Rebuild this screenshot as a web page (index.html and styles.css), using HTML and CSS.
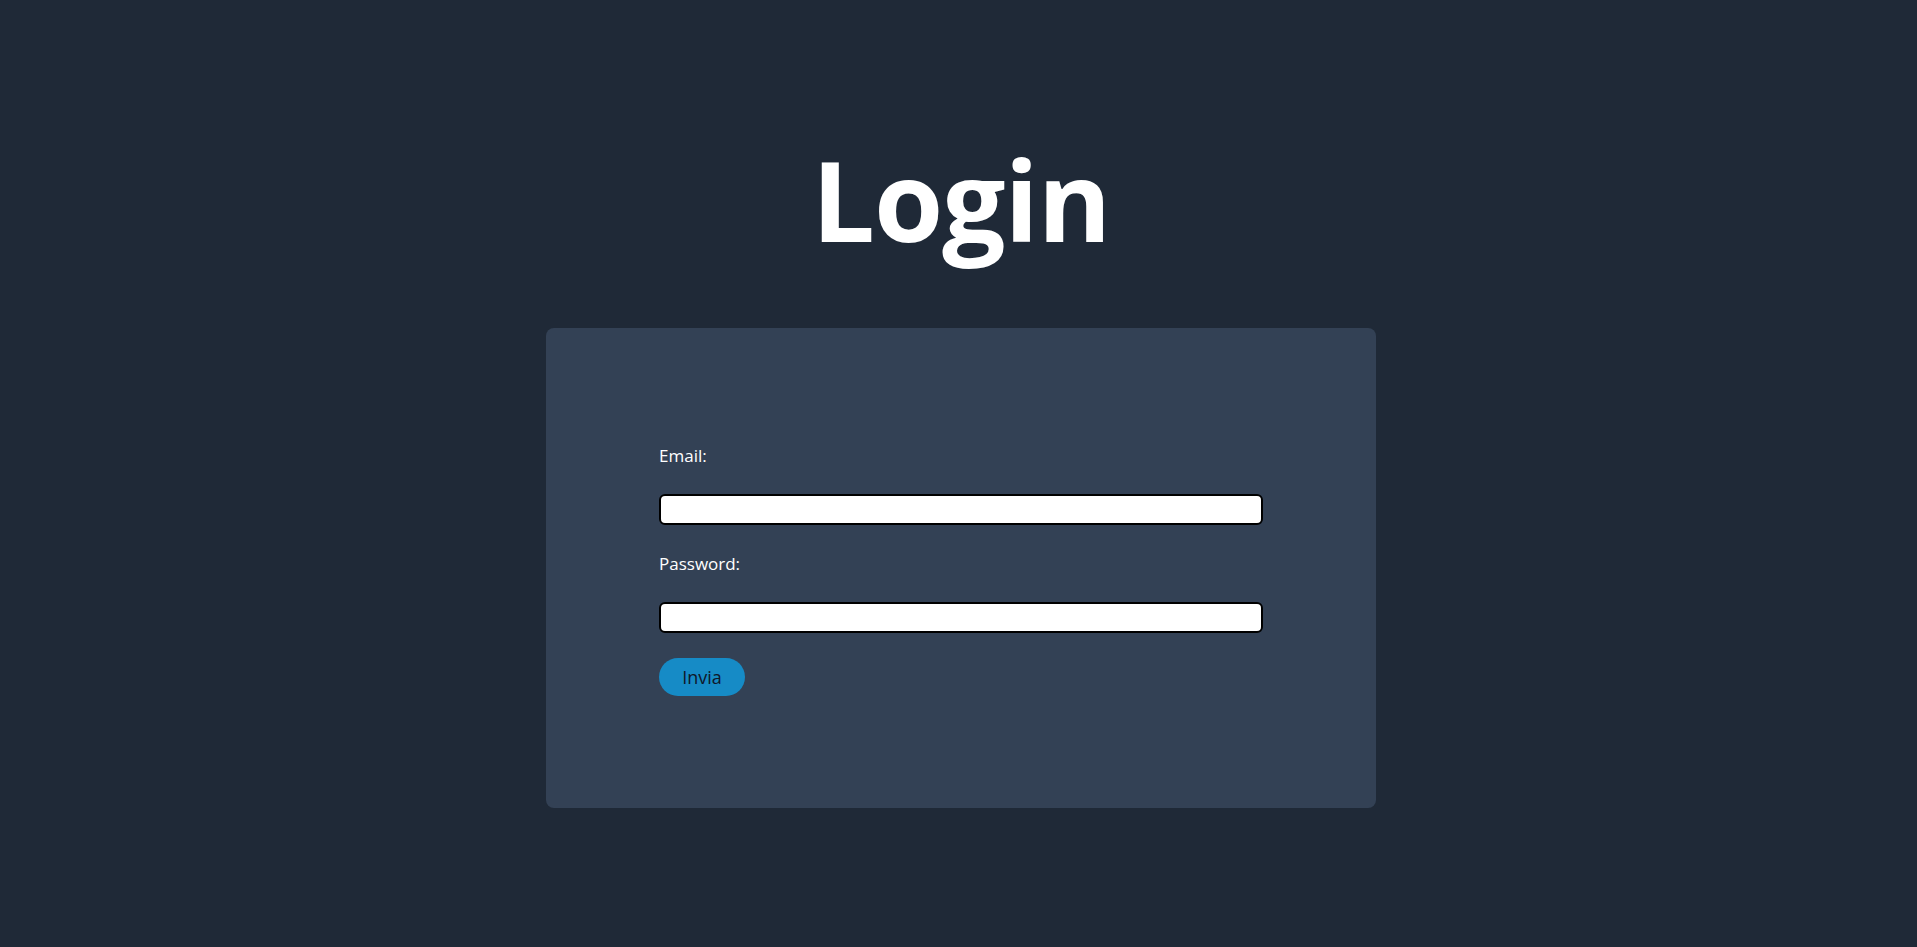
FILE: index.html
```html
<!DOCTYPE html>
<html lang="it">
<head>
    <meta charset="UTF-8">
    <meta name="viewport" content="width=device-width, initial-scale=1.0">
    <title>Login</title>
    <link rel="stylesheet" href="styles.css">
</head>
<body>
    <main class="page">
        <h1 class="title">Login</h1>
        <div class="card">
            <form class="login-form" onsubmit="return false;">
                <label for="email" class="field-label">Email:</label>
                <input type="email" id="email" class="field-input">
                <label for="password" class="field-label">Password:</label>
                <input type="password" id="password" class="field-input">
                <button type="submit" class="submit-button">Invia</button>
            </form>
        </div>
    </main>
</body>
</html>
```

FILE: styles.css
```css
body {
    margin: 0;
    background-color: #1f2937;
    font-family: "Open Sans", "Noto Sans", sans-serif;
    color: white;
}
.page {
    display: flex;
    flex-direction: column;
    align-items: center;
    min-height: 947px;
    padding-left: 5px;
}
.title {
    font-size: 112px;
    font-weight: 700;
    line-height: 1;
    margin: 143px 0 0;
    letter-spacing: -1px;
}
.card {
    margin-top: 73px;
    width: 830px;
    height: 480px;
    box-sizing: border-box;
    background-color: #334155;
    border-radius: 8px;
    padding: 116px 113px 0;
}
.login-form {
    display: flex;
    flex-direction: column;
    align-items: flex-start;
}
.field-label {
    font-size: 17px;
    line-height: 24px;
    margin-bottom: 26px;
}
.field-input {
    width: 100%;
    height: 31px;
    box-sizing: border-box;
    border: 2px solid black;
    border-radius: 6px;
    background: white;
    margin: 0 0 27px;
    padding: 0 8px;
}
.submit-button {
    background-color: #168bc6;
    color: #0f172a;
    border: none;
    border-radius: 20px;
    font-family: inherit;
    font-size: 18px;
    height: 38px;
    width: 86px;
    padding: 0;
    margin-top: -2px;
    cursor: pointer;
}
```
